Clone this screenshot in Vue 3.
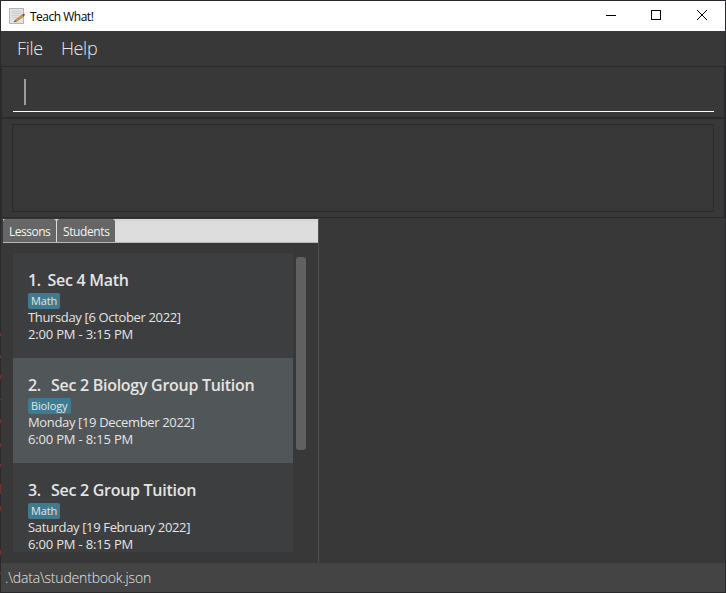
<script setup>
const lessons = [
  { id: 1, name: 'Sec 4 Math', tag: 'Math', date: 'Thursday [6 October 2022]', time: '2:00 PM - 3:15 PM' },
  { id: 2, name: 'Sec 2 Biology Group Tuition', tag: 'Biology', date: 'Monday [19 December 2022]', time: '6:00 PM - 8:15 PM' },
  { id: 3, name: 'Sec 2 Group Tuition', tag: 'Math', date: 'Saturday [19 February 2022]', time: '6:00 PM - 8:15 PM' },
]
</script>

<template>
  <div class="window">
    <svg class="edge" width="1" height="593" viewBox="0 0 1 593">
      <path d="M.5 333v3M.5 355v3M.5 375v4M.5 399v1M.5 419v4M.5 443v4M.5 464v3M.5 484v10M.5 506v5M.5 550v5M.5 572v2" stroke="#6b3432" />
    </svg>
    <header class="titlebar">
      <svg class="app-icon" width="16" height="16" viewBox="0 0 16 16">
        <rect x="0.5" y="0.5" width="14" height="15" fill="#dfe1e2" stroke="#b3b6b8" />
        <path d="M3 3.5h9M3 5.5h9M3 7.5h7M3 9.5h5" stroke="#cdd0d2" />
        <path d="M5 14L6.8 11.6L13.2 6.7L14.6 8.3L8 13.2Z" fill="#d09a48" stroke="#9b6b2a" stroke-width=".5" />
        <path d="M13 6.8L15 5.6L16 6.8L14.5 8.4Z" fill="#a83c32" />
        <path d="M5 14L6.3 12.1L7.5 13.3Z" fill="#66513a" />
      </svg>
      <span class="title">Teach What!</span>
      <svg class="controls" width="138" height="30" viewBox="0 0 138 30" fill="none" stroke="#000" stroke-width="1">
        <path d="M19 14.5h10" />
        <rect x="64.5" y="9.5" width="9" height="9" />
        <path d="M110 9l10 10M120 9l-10 10" />
      </svg>
    </header>
    <nav class="menubar">
      <span class="file">File</span>
      <span class="help">Help</span>
    </nav>
    <section class="command">
      <div class="field"><i class="caret"></i></div>
    </section>
    <section class="result"><div class="result-box"></div></section>
    <main class="content">
      <section class="left">
        <div class="tabs">
          <span class="tab lessons">Lessons</span>
          <span class="tab students">Students</span>
        </div>
        <div class="list-area">
          <div class="list">
            <article v-for="lesson in lessons" :key="lesson.id" class="cell" :class="{ even: lesson.id === 2 }">
              <h2 :class="{ first: lesson.id === 1 }"><span class="num">{{ lesson.id }}.</span><span>{{ lesson.name }}</span></h2>
              <span class="tag" :class="lesson.tag.toLowerCase()">{{ lesson.tag }}</span>
              <p>{{ lesson.date }}</p>
              <p class="time">{{ lesson.time }}</p>
            </article>
          </div>
          <div class="thumb"></div>
        </div>
      </section>
    </main>
    <footer class="status">.\data\studentbook.json</footer>
  </div>
</template>

<style>
body { margin: 0; background: #383838; }
</style>

<style scoped>
.window {
  position: relative;
  box-sizing: border-box;
  width: 726px;
  height: 593px;
  border: 1px solid #29292b;
  background: #383838;
  display: flex;
  flex-direction: column;
  font-family: "Open Sans", "Noto Sans", sans-serif;
  color: #e4e4e4;
}
.edge { position: absolute; left: -1px; top: -1px; }
.titlebar {
  height: 30px;
  flex: none;
  background: #fff;
  color: #000;
  display: flex;
  align-items: center;
}
.app-icon { margin-left: 8px; }
.title { margin-left: 5px; font-size: 12px; letter-spacing: -0.5px; }
.controls { margin-left: auto; }
.menubar {
  height: 35px;
  flex: none;
  display: flex;
  align-items: center;
  padding-left: 16px;
  gap: 18px;
  font-size: 18px;
  font-weight: 300;
  line-height: 35px;
  letter-spacing: -0.3px;
  color: #e8e8e8;
}
.command {
  box-sizing: border-box;
  height: 53px;
  flex: none;
  border: 1px solid #2a2a2a;
  border-bottom-width: 2px;
  padding: 0 10px 0 11px;
}
.field {
  box-sizing: border-box;
  height: 45px;
  border-bottom: 1px solid #fff;
  padding: 12px 0 0 11px;
}
.caret { display: block; width: 2px; height: 26px; background: #9b9b9b; }
.result {
  box-sizing: border-box;
  height: 99px;
  flex: none;
  border: 1px solid #2a2a2a;
  border-top: 0;
  padding: 5px 10px 5px 10px;
}
.result-box { box-sizing: border-box; height: 88px; border: 1px solid #2a2a2a; }
.content { height: 345px; flex: none; display: flex; }
.left {
  box-sizing: border-box;
  width: 318px;
  height: 344px;
  padding: 1px 0 0 2px;
  border-right: 1px solid #505050;
}
.tabs {
  box-sizing: border-box;
  height: 24px;
  display: flex;
  gap: 1px;
  background: linear-gradient(#d2d2d2, #dddddd 4px);
  border-bottom: 1px solid #b5b9b6;
}
.tab {
  box-sizing: border-box;
  height: 23px;
  padding-left: 6px;
  border-radius: 3px 3px 0 0;
  background: #666;
  font-size: 12px;
  line-height: 25px;
  white-space: nowrap;
  color: #f4f4f4;
}
.lessons { width: 53px; letter-spacing: -0.5px; }
.students { width: 58px; letter-spacing: -0.4px; }
.list-area { display: flex; padding: 10px 0 0 10px; gap: 3px; }
.list { width: 280px; height: 299px; overflow: hidden; }
.cell {
  box-sizing: border-box;
  height: 105px;
  padding: 17px 0 0 15px;
  background: #3c3e3f;
}
.cell.even { background: #515658; }
h2 {
  margin: 0;
  height: 23px;
  display: flex;
  gap: 10px;
  font-size: 16px;
  font-weight: 600;
  line-height: 20px;
  letter-spacing: -0.28px;
  white-space: nowrap;
}
h2.first { gap: 7px; }
.first .num { letter-spacing: -0.5px; }
.tag {
  display: block;
  box-sizing: border-box;
  height: 16px;
  padding-left: 3px;
  border-radius: 2px;
  background: #3e7b91;
  font-size: 11px;
  line-height: 16px;
  letter-spacing: -0.15px;
}
.math { width: 32px; }
.biology { width: 43px; }
p {
  margin: 0;
  height: 17px;
  font-size: 13px;
  line-height: 17px;
  white-space: nowrap;
  letter-spacing: -0.35px;
}
.time { letter-spacing: -0.18px; }
.thumb { width: 10px; height: 193px; margin-top: 4px; border-radius: 3px; background: #606060; }
.status {
  height: 29px;
  flex: none;
  padding-left: 4px;
  background: #444;
  font-size: 14px;
  font-weight: 300;
  line-height: 30px;
  letter-spacing: -0.18px;
}
</style>
